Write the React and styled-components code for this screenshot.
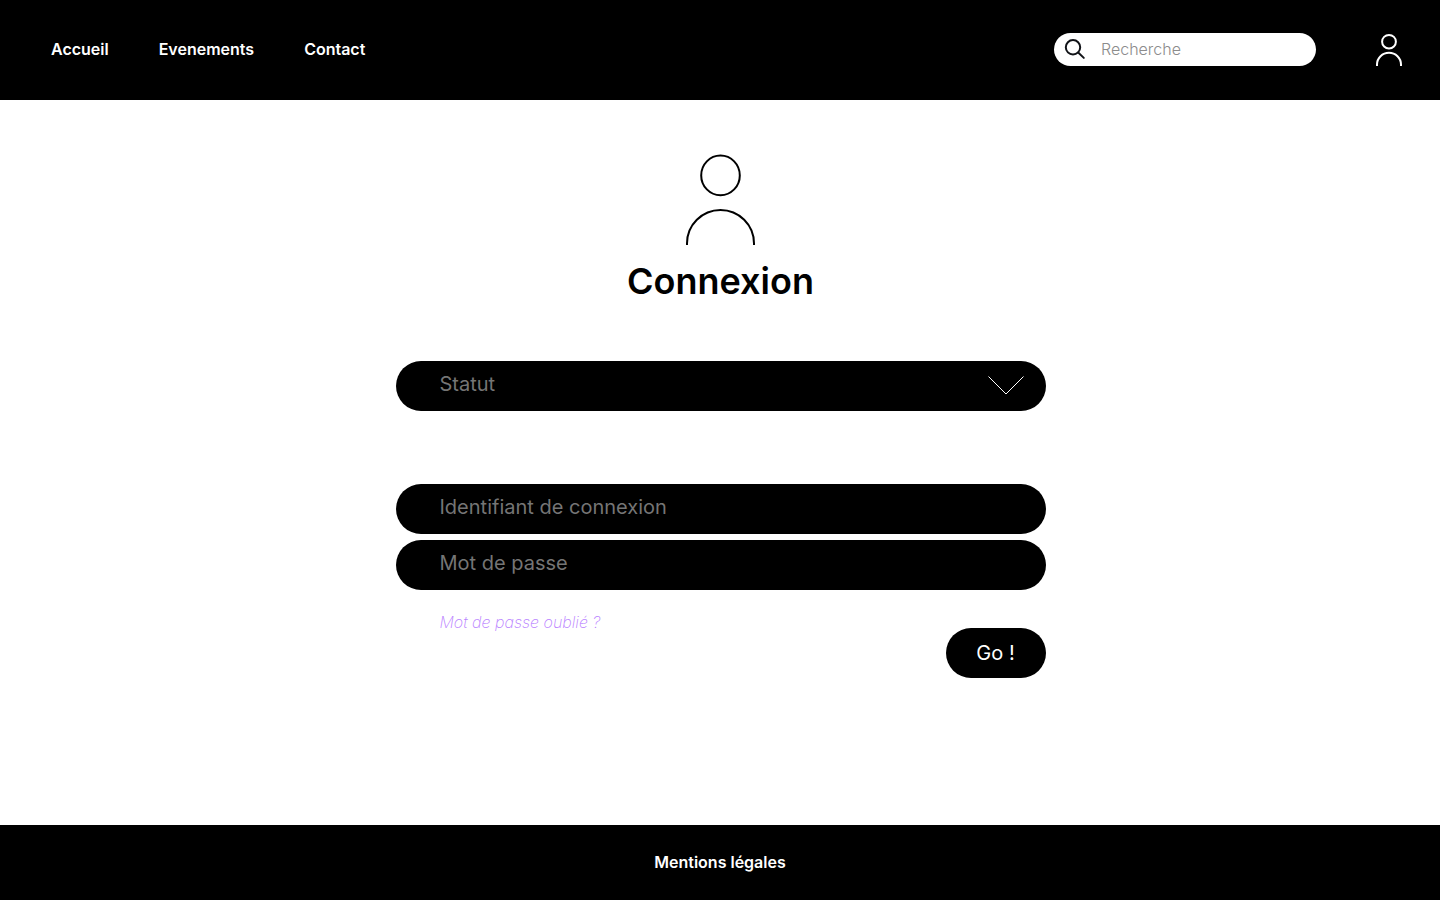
import React from "react";
import styled, { createGlobalStyle } from "styled-components";

const GlobalStyle = createGlobalStyle`
  *, *::before, *::after { box-sizing: border-box; }
  body {
    margin: 0;
    background: #fff;
    color: #000;
    font-family: Inter, sans-serif;
  }
  input, select, button { font-family: inherit; }
`;

const Page = styled.div`
  display: flex;
  flex-direction: column;
  min-height: 100vh;
`;

const Header = styled.header`
  display: flex;
  align-items: center;
  justify-content: space-between;
  height: 100px;
  padding: 0 37px 2px 51px;
  background: #000;
`;

const Nav = styled.nav`
  display: flex;
  gap: 50px;
`;

const BarLink = styled.a`
  color: #fff;
  font-size: 16px;
  font-weight: 600;
  line-height: 20px;
  text-decoration: none;
`;

const Tools = styled.div`
  display: flex;
  align-items: center;
  gap: 59px;
`;

const SearchBox = styled.label`
  display: flex;
  align-items: center;
  gap: 15px;
  width: 262px;
  height: 33px;
  padding: 0 16px 0 10px;
  border-radius: 17px;
  background: #fff;
`;

const SearchInput = styled.input`
  flex: 1;
  min-width: 0;
  padding: 0;
  border: 0;
  outline: 0;
  background: transparent;
  font-size: 16px;
  font-weight: 300;
  line-height: 20px;
  &::placeholder { color: #8c8c8c; opacity: 1; }
`;

const AccountLink = styled.a`
  display: flex;
  color: #fff;
`;

const Main = styled.main`
  flex: 1;
  display: flex;
  flex-direction: column;
  align-items: center;
  padding: 54px 0 48px 1px;
`;

const Title = styled.h1`
  margin: 12px 0 0;
  font-size: 36px;
  font-weight: 600;
  line-height: 48px;
`;

const Form = styled.form`
  display: flex;
  flex-direction: column;
  width: 650px;
  max-width: 100%;
  margin-top: 56px;
`;

const fieldStyles = `
  width: 100%;
  height: 50px;
  padding: 0 44px 4px;
  border: 0;
  border-radius: 25px;
  outline: 0;
  background: #000;
  color: #757575;
  font-size: 20px;
  font-weight: 400;
  line-height: 24px;
`;

const SelectWrap = styled.div`
  position: relative;
  margin-bottom: 73px;
`;

const Select = styled.select`
  ${fieldStyles}
  display: block;
  appearance: none;
`;

const Chevron = styled.svg`
  position: absolute;
  top: 14px;
  right: 22px;
  pointer-events: none;
`;

const Credentials = styled.div`
  display: flex;
  flex-direction: column;
  gap: 6px;
`;

const Field = styled.input`
  ${fieldStyles}
  &::placeholder { color: #757575; opacity: 1; }
`;

const Actions = styled.div`
  display: flex;
  align-items: flex-start;
  justify-content: space-between;
  padding: 22px 0 0 44px;
`;

const ForgotLink = styled.a`
  color: #b982ff;
  font-size: 16px;
  font-style: oblique 10deg;
  font-weight: 200;
  line-height: 20px;
  text-decoration: none;
`;

const SubmitButton = styled.button`
  width: 100px;
  height: 50px;
  margin-top: 16px;
  padding: 0;
  border: 0;
  border-radius: 25px;
  background: #000;
  color: #fff;
  font-size: 20px;
  font-weight: 400;
  line-height: 24px;
`;

const Footer = styled.footer`
  display: flex;
  align-items: center;
  justify-content: center;
  height: 75px;
  padding-bottom: 2px;
  background: #000;
`;

function SmallPerson() {
  return (
    <svg width="28" height="34" viewBox="0 0 28 34" fill="none" stroke="currentColor" strokeWidth="2" aria-hidden="true">
      <ellipse cx="14" cy="9.7" rx="6.9" ry="6.8" />
      <path d="M2 34V32.5a12 11.7 0 0 1 24 0V34" />
    </svg>
  );
}

function LargePerson() {
  return (
    <svg width="71" height="91" viewBox="0 0 71 91" fill="none" stroke="#000" strokeWidth="2" aria-hidden="true">
      <ellipse cx="35.5" cy="21.4" rx="19.3" ry="19.8" />
      <path d="M2 91V89.5a33.5 33.5 0 0 1 67 0V91" />
    </svg>
  );
}

function Magnifier() {
  return (
    <svg width="22" height="22" viewBox="0 0 22 22" fill="none" stroke="#111318" strokeWidth="2" strokeLinecap="round" aria-hidden="true">
      <circle cx="9" cy="9.3" r="7.2" />
      <path d="M14.2 14.5l5.6 5.4" />
    </svg>
  );
}

export default function App() {
  return (
    <>
      <GlobalStyle />
      <Page>
        <Header>
          <Nav>
            <BarLink href="#accueil">Accueil</BarLink>
            <BarLink href="#evenements">Evenements</BarLink>
            <BarLink href="#contact">Contact</BarLink>
          </Nav>
          <Tools>
            <SearchBox>
              <Magnifier />
              <SearchInput type="search" placeholder="Recherche" aria-label="Recherche" />
            </SearchBox>
            <AccountLink href="#connexion" aria-label="Connexion">
              <SmallPerson />
            </AccountLink>
          </Tools>
        </Header>
        <Main>
          <LargePerson />
          <Title>Connexion</Title>
          <Form onSubmit={(event) => event.preventDefault()}>
            <SelectWrap>
              <Select aria-label="Statut" defaultValue="">
                <option value="">Statut</option>
              </Select>
              <Chevron width="38" height="22" viewBox="0 0 38 22" fill="none" stroke="#fff">
                <path d="M2.5 1.5L20 19L37.5 1.5" />
              </Chevron>
            </SelectWrap>
            <Credentials>
              <Field type="text" placeholder="Identifiant de connexion" aria-label="Identifiant de connexion" />
              <Field type="password" placeholder="Mot de passe" aria-label="Mot de passe" />
            </Credentials>
            <Actions>
              <ForgotLink href="#mot-de-passe">Mot de passe oublié ?</ForgotLink>
              <SubmitButton type="submit">Go !</SubmitButton>
            </Actions>
          </Form>
        </Main>
        <Footer>
          <BarLink href="#mentions">Mentions légales</BarLink>
        </Footer>
      </Page>
    </>
  );
}
